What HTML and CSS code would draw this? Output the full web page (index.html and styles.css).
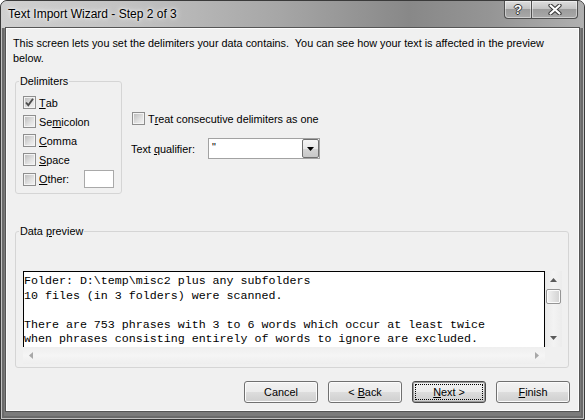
FILE: index.html
```html
<!DOCTYPE html>
<html>

<head>
    <title>Text Import Wizard - Step 2 of 3</title>
    <link rel="stylesheet" href="styles.css">
</head>

<body>
    <div class="window">
        <div class="titlebar">
            <span class="title">Text Import Wizard - Step 2 of 3</span>
            <div class="caption">
                <span class="cap-btn cap-help">?</span>
                <span class="cap-btn cap-close">
                    <svg width="14" height="11" viewBox="0 0 14 11">
                        <path d="M2.5 1.5 L11.5 9.5 M11.5 1.5 L2.5 9.5" stroke="#3a3a3a" stroke-width="4.2" stroke-linecap="round"/>
                        <path d="M2.5 1.5 L11.5 9.5 M11.5 1.5 L2.5 9.5" stroke="#fff" stroke-width="2.2" stroke-linecap="round"/>
                    </svg>
                </span>
            </div>
        </div>

        <div class="client">
            <p class="intro">This screen lets you set the delimiters your data contains.&nbsp; You can see how your text is affected in the preview<br>below.</p>

            <div class="options">
                <fieldset class="group delimiters">
                    <legend>Delimiters</legend>
                    <label class="check-row">
                        <span class="checkbox">
                            <svg width="11" height="11" viewBox="0 0 11 11">
                                <path d="M2 5.5 L4.3 8.2 L9 1.8" fill="none" stroke="#4d4d4d" stroke-width="1.9"/>
                            </svg>
                        </span><u>T</u>ab
                    </label>
                    <label class="check-row"><span class="checkbox"></span>Se<u>m</u>icolon</label>
                    <label class="check-row"><span class="checkbox"></span><u>C</u>omma</label>
                    <label class="check-row"><span class="checkbox"></span><u>S</u>pace</label>
                    <label class="check-row other-row"><span class="checkbox"></span><u>O</u>ther:<span class="textbox"></span></label>
                </fieldset>

                <div class="side-options">
                    <label class="check-row treat-row"><span class="checkbox"></span>T<u>r</u>eat consecutive delimiters as one</label>
                    <div class="qualifier-row">
                        <span class="qualifier-label">Text <u>q</u>ualifier:</span>
                        <div class="combo">
                            <span class="combo-value">"</span>
                            <span class="combo-btn">
                                <svg width="7" height="4" viewBox="0 0 7 4"><path d="M0 0 H7 L3.5 4 Z" fill="#000"/></svg>
                            </span>
                        </div>
                    </div>
                </div>
            </div>

            <fieldset class="group preview-group">
                <legend>Data <u>p</u>review</legend>
                <div class="preview">
                    <pre class="preview-text">Folder: D:\temp\misc2 plus any subfolders
10 files (in 3 folders) were scanned.

There are 753 phrases with 3 to 6 words which occur at least twice
when phrases consisting entirely of words to ignore are excluded.</pre>
                    <div class="vscroll">
                        <svg width="7" height="4" viewBox="0 0 7 4"><path d="M0 4 H7 L3.5 0 Z" fill="#5a5a5a"/></svg>
                        <span class="thumb"></span>
                        <svg class="down-arrow" width="7" height="4" viewBox="0 0 7 4"><path d="M0 0 H7 L3.5 4 Z" fill="#5a5a5a"/></svg>
                    </div>
                    <div class="hscroll">
                        <svg width="4" height="7" viewBox="0 0 4 7"><path d="M4 0 V7 L0 3.5 Z" fill="#a8a8a8"/></svg>
                        <svg width="4" height="7" viewBox="0 0 4 7"><path d="M0 0 V7 L4 3.5 Z" fill="#a8a8a8"/></svg>
                    </div>
                    <div class="corner"></div>
                </div>
            </fieldset>

            <div class="buttons">
                <button class="btn">Cancel</button>
                <button class="btn">&lt; <u>B</u>ack</button>
                <button class="btn btn-default"><u>N</u>ext &gt;</button>
                <button class="btn"><u>F</u>inish</button>
            </div>
        </div>
    </div>
</body>

</html>
```

FILE: styles.css
```css
body {
    margin: 0;
    font-family: "Liberation Sans", Arial, sans-serif;
    font-size: 10.85px;
    color: #000;
}

u {
    text-underline-offset: 1px;
}

.window {
    width: 585px;
    height: 420px;
    box-sizing: border-box;
    display: flex;
    flex-direction: column;
    border: 1px solid #3a3a3a;
    border-radius: 7px 7px 0 0;
    background: #7b7b7b;
    box-shadow: inset 0 0 0 1px #c2c2c2, inset 0 0 0 3px #6a6a6a;
    overflow: hidden;
}

/* title bar */

.titlebar {
    height: 27px;
    box-sizing: border-box;
    display: flex;
    align-items: flex-start;
    padding: 6px 6px 0 7px;
    background: linear-gradient(to right, #d0d0d0 0%, #c2c2c2 22%, #a6a6a6 48%, #888 70%, #959595 84%, #b0b0b0 100%);
}

.title {
    font-size: 12px;
    line-height: 15px;
    text-shadow: 0 0 6px #fff, 0 0 3px #fff;
}

.caption {
    margin-left: auto;
    margin-top: -6px;
    display: flex;
}

.cap-btn {
    height: 18px;
    box-sizing: border-box;
    display: flex;
    align-items: center;
    justify-content: center;
    border: 1px solid #505050;
    border-top: none;
    background: linear-gradient(#dedede 0%, #c4c4c4 45%, #9c9c9c 50%, #a9a9a9 100%);
    box-shadow: inset 0 0 0 1px rgba(255, 255, 255, 0.45);
}

.cap-help {
    width: 27px;
    border-right: none;
    border-radius: 0 0 0 4px;
    color: #fff;
    font-weight: bold;
    font-size: 13px;
    line-height: 16px;
    text-shadow: 1px 0 0 #333, -1px 0 0 #333, 0 1px 0 #333, 0 -1px 0 #333;
}

.cap-close {
    width: 47px;
    border-radius: 0 0 4px 0;
}

/* client area */

.client {
    flex: 1;
    margin: 0 5px 8px 5px;
    display: flex;
    flex-direction: column;
    background: #f0f0f0;
    border: 1px solid #fcfcfc;
    box-shadow: 0 0 0 1px #555;
}

.intro {
    margin: 7px 0 0 6px;
    line-height: 15px;
}

.options {
    display: flex;
    align-items: flex-start;
    margin: 8px 0 0 8px;
}

.group {
    margin: 0;
    border: 1px solid #d5d5d5;
    border-radius: 3px;
    min-width: 0;
}

.group legend {
    padding: 0 1px;
    margin-left: -4px;
    line-height: 15px;
}

.delimiters {
    width: 107px;
    box-sizing: border-box;
    padding: 4px 7px 4px 7px;
}

.check-row {
    display: flex;
    align-items: center;
    height: 19px;
    white-space: nowrap;
}

.other-row {
    height: 20px;
}

.checkbox {
    flex: none;
    width: 13px;
    height: 13px;
    box-sizing: border-box;
    margin-right: 3px;
    display: flex;
    align-items: center;
    justify-content: center;
    border: 1px solid #8e8e8e;
    background: linear-gradient(135deg, #b9b9b9 0%, #e2e2e2 60%, #f5f5f5 100%);
    box-shadow: inset 0 0 0 1px #f4f4f4;
}

.textbox {
    margin-left: auto;
    width: 30px;
    height: 18px;
    box-sizing: border-box;
    border: 1px solid #a9a9a9;
    background: #fff;
}

.side-options {
    margin-left: 10px;
    padding-top: 37px;
}

.treat-row {
    height: 15px;
}

.qualifier-row {
    display: flex;
    align-items: center;
    margin-top: 12px;
}

.qualifier-label {
    width: 77px;
    margin-left: -1px;
}

.combo {
    width: 112px;
    height: 21px;
    box-sizing: border-box;
    display: flex;
    border: 1px solid #a2a2a2;
    background: #fff;
}

.combo-value {
    flex: 1;
    padding: 1px 3px;
    line-height: 15px;
}

.combo-btn {
    width: 17px;
    height: 19px;
    box-sizing: border-box;
    display: flex;
    align-items: center;
    justify-content: center;
    border: 1px solid #6f6f6f;
    border-radius: 2px;
    background: linear-gradient(#f4f4f4 0%, #e8e8e8 50%, #d4d4d4 50%, #c8c8c8 100%);
}

/* data preview */

.preview-group {
    margin: 30px 9px 0 8px;
    padding: 32px 6px 3px 7px;
}

.preview {
    display: grid;
    grid-template-columns: 1fr 17px;
    grid-template-rows: 76px 17px;
}

.preview-text {
    margin: 0;
    box-sizing: border-box;
    padding: 2px 0 0 0;
    border: 1px solid #000;
    border-bottom: none;
    background: #fff;
    font-family: "Liberation Mono", "Courier New", monospace;
    font-size: 11.65px;
    line-height: 14.5px;
    overflow: hidden;
}

.vscroll {
    display: flex;
    flex-direction: column;
    align-items: center;
    padding-top: 7px;
    background: linear-gradient(to right, #e9e9e9, #f3f3f3 50%, #ececec);
}

.thumb {
    width: 15px;
    height: 15px;
    box-sizing: border-box;
    margin-top: 7px;
    border: 1px solid #959595;
    border-radius: 2px;
    background: linear-gradient(to right, #f4f4f4, #e2e2e2 50%, #d2d2d2);
    box-shadow: inset 0 0 0 1px #fbfbfb;
}

.down-arrow {
    margin-top: auto;
    margin-bottom: 7px;
}

.hscroll {
    display: flex;
    align-items: center;
    justify-content: space-between;
    padding: 0 6px;
    background: linear-gradient(#efefef, #f5f5f5 50%, #eeeeee);
}

.corner {
    background: #f0f0f0;
}

/* buttons */

.buttons {
    display: flex;
    justify-content: flex-end;
    gap: 10px;
    margin: 13px 8px 0 0;
}

.btn {
    position: relative;
    width: 74px;
    height: 22px;
    padding: 0;
    box-sizing: border-box;
    border: 1px solid #707070;
    border-radius: 3px;
    background: linear-gradient(#f2f2f2 0%, #ebebeb 50%, #dddddd 50%, #cfcfcf 100%);
    box-shadow: inset 0 0 0 1px #fbfbfb;
    font-family: "Liberation Sans", Arial, sans-serif;
    font-size: 10.85px;
    color: #000;
}

.btn-default {
    border-color: #4a4a4a;
    box-shadow: inset 0 0 0 1px #9c9c9c;
}

.btn-default::after {
    content: "";
    position: absolute;
    top: 2px;
    left: 2px;
    right: 2px;
    bottom: 2px;
    border: 1px dotted #000;
}
```
